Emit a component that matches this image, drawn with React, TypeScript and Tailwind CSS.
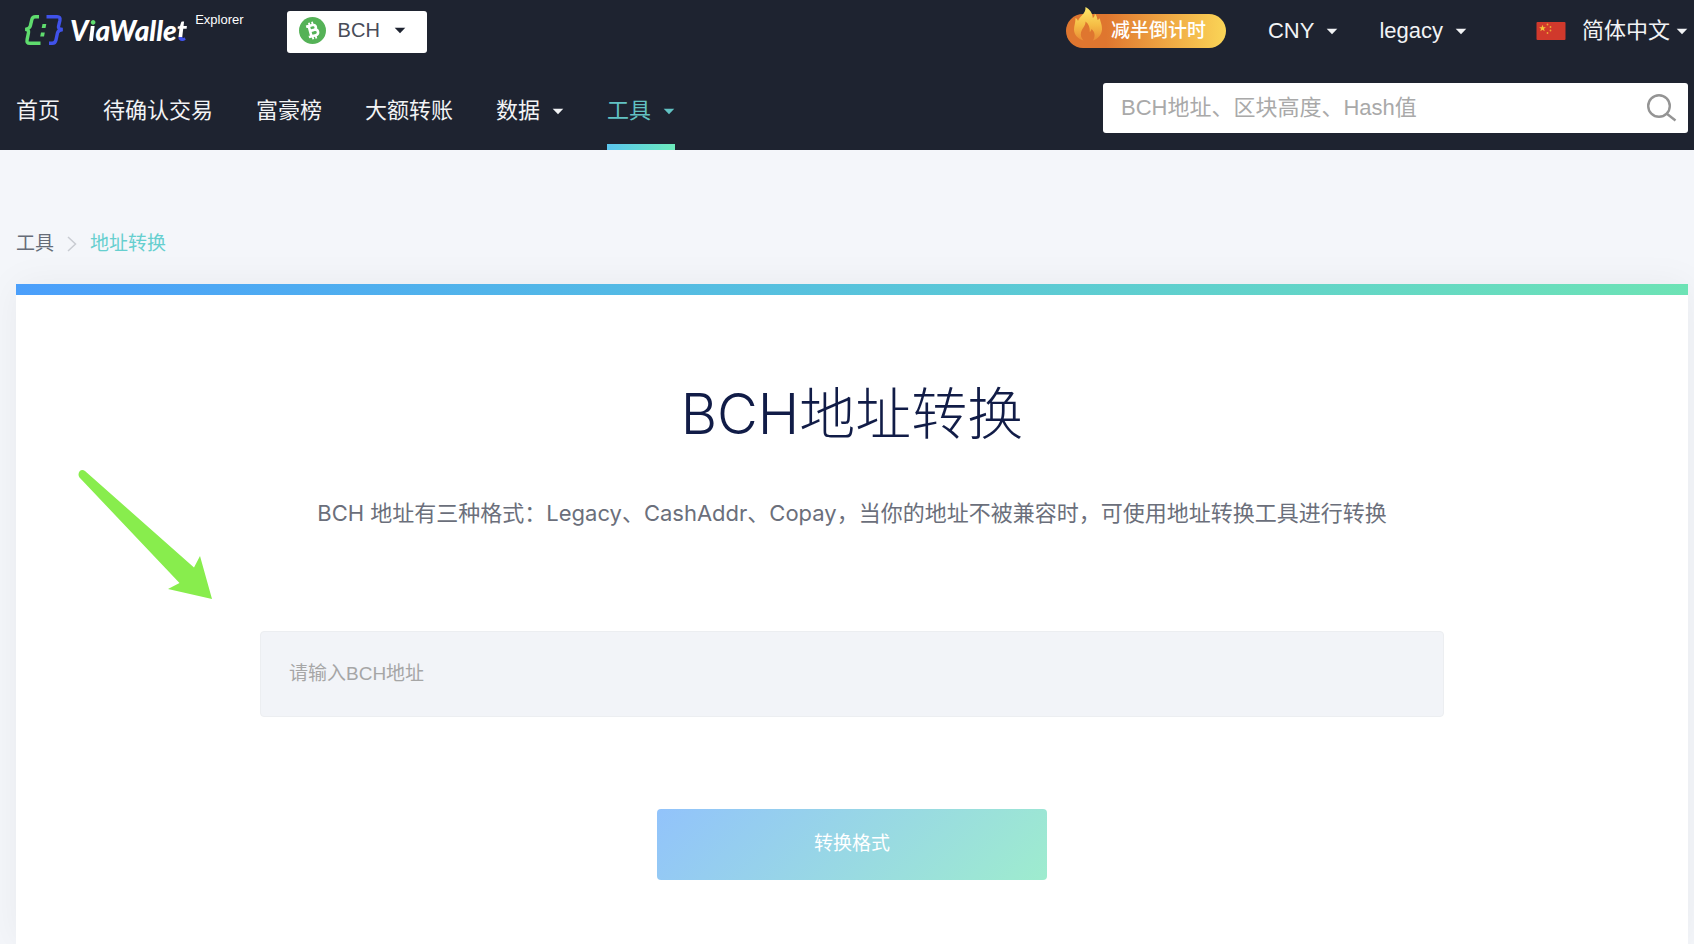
import React from 'react'

function Caret({ className = '' }: { className?: string }) {
  return (
    <svg className={`w-3 h-[7px] shrink-0 ${className}`} viewBox="0 0 12 7" fill="currentColor" aria-hidden="true">
      <path d="M0.7 0.8h10.6L6 6.2z" />
    </svg>
  )
}

function Logo() {
  return (
    <a href="#" className="flex text-white">
      <svg className="w-[42px] h-8 mt-[14px] shrink-0" viewBox="0 0 42 32" fill="none" strokeWidth="3.4" aria-hidden="true">
        <path d="M16 2.700h-3.500c-2.200 0-3.200.9-3.600 2.700L7.300 12c-.4 1.900-1.700 2.900-5 3.400 2.800.4 3.600 1.400 3.200 3.200l-1.400 7c-.5 2.600.4 3.700 2.700 3.700h10.700" stroke="#5fdc6e" />
        <path d="M23.500 2.700h10.700c2.300 0 3.200 1.100 2.700 3.600l-1.400 6.200c-.4 1.900.6 2.700 4.200 3-3.600.4-4.800 1.500-5.200 3.400l-1.500 6.900c-.5 2.400-1.600 3.500-3.800 3.500H26" stroke="#4052ea" />
        <path d="M19.500 10h3.800l-.8 4h-3.800zM18 18.400h3.800l-.8 4h-3.800z" fill="#5fdc6e" />
      </svg>
      <span className="ml-[5px] mt-[14px] whitespace-nowrap font-[Lato,sans-serif] text-[28px] leading-8 font-black italic">
        V
        <span className="-mx-1 bg-linear-to-b from-[#5fdc6e] from-[12px] to-white to-[12px] bg-clip-text px-1 text-transparent">i</span>
        aWalle
        <span className="-mx-1 bg-linear-to-b from-white from-[24px] to-[#4052ea] to-[24px] bg-clip-text px-1 text-transparent">t</span>
      </span>
      <span className="ml-2 mt-3 text-[13px] leading-4">Explorer</span>
    </a>
  )
}

function BchIcon() {
  return (
    <svg className="w-[27px] h-[27px]" viewBox="0 0 27 27" aria-hidden="true">
      <circle cx="13.5" cy="13.5" r="13.5" fill="#55b257" />
      <g transform="rotate(-15 13.5 13.5)" fill="none" stroke="#fff" strokeWidth="2.6">
        <path d="M8.300 8.300h6.600c3.600 0 3.600 5 0 5h-3.600 4.200c4 0 4 5.600 0 5.600H8.300M11 8.300v10.600" />
        <path d="M12 5v3.300M15.200 5v3.300M12 18.900v3.300M15.200 18.900v3.300" strokeWidth="1.8" />
      </g>
    </svg>
  )
}

function FlameIcon() {
  return (
    <svg className="absolute left-[7px] -top-2 w-[30px] h-[36px]" viewBox="0 0 30 36" aria-hidden="true">
      <defs>
        <linearGradient id="flame" x1="0" y1="0" x2="0" y2="1">
          <stop offset="0" stopColor="#fde96a" />
          <stop offset=".55" stopColor="#f5bc45" />
          <stop offset="1" stopColor="#e98b35" />
        </linearGradient>
      </defs>
      <path
        d="M12.500 1c4.500 2.200 7 6 7.300 11 1.500-1 2-2.500 2-4.500 2 2.200 2.300 4 2.700 6.500 1.200-.5 1.800-1 2.500-2-.3 3 2.300 6 2 11.500-.3 5-3.600 9-9 11 2.500-4.500 2-8.500-1.500-11.500-.3 1.500-.8 2.300-1.700 3 .2-4.500-1-8-4.300-10.500.3 4.500-3.500 6.500-4.500 11-.7 3 .3 5.500 2.500 8C4.500 32.500 1 28.500 1 23.500c0-4 1.500-6.500 1.500-11.500 1.300.7 2 1.500 2.500 3C6.500 10 13 8 12.500 1z"
        fill="url(#flame)"
      />
    </svg>
  )
}

function ChinaFlag() {
  return (
    <svg className="w-[30px] h-5" viewBox="0 0 30 20" aria-hidden="true">
      <rect x="0.5" y="1" width="29" height="18" rx="1" fill="#d0392c" />
      <path d="M6.500 3.800l.9 2.400h2.500l-2 1.600.8 2.500-2.200-1.500-2.200 1.500.8-2.500-2-1.600h2.500z" fill="#f4c53a" />
      <g fill="#eda835">
        <circle cx="11.5" cy="3.500" r=".9" />
        <circle cx="14.5" cy="6" r=".9" />
        <circle cx="14.5" cy="9.500" r=".9" />
        <circle cx="11.5" cy="12" r=".9" />
      </g>
    </svg>
  )
}

const navItems = [
  { label: '首页' },
  { label: '待确认交易' },
  { label: '富豪榜' },
  { label: '大额转账' },
  { label: '数据', menu: true },
  { label: '工具', menu: true, active: true },
]

function Header() {
  return (
    <header className="bg-[#1e2330] text-[#f2f3f5] pl-4 pr-[6px] text-[22px] leading-8">
      {/* Top bar */}
      <div className="flex justify-between h-[68px]">
        <div className="flex items-start pl-[7px]">
          <Logo />
          <button className="ml-[43px] mt-[11px] flex h-[42px] w-[140px] items-center rounded-[3px] bg-white pb-1 pl-3 text-xl text-[#484c58]">
            <BchIcon />
            <span className="ml-3">BCH</span>
            <Caret className="ml-[14px] text-[#1e2330]" />
          </button>
        </div>
        <div className="flex h-[62px] items-center">
          <a href="#" className="relative flex h-[34px] items-center rounded-full bg-linear-to-r from-[#df762f] from-25% to-[#fad557] pl-[45px] pr-5 text-[19px] font-medium text-white">
            <FlameIcon />
            减半倒计时
          </a>
          <button className="ml-[42px] flex items-center gap-3">
            CNY
            <Caret />
          </button>
          <button className="ml-[41px] flex items-center gap-3">
            legacy
            <Caret />
          </button>
          <button className="ml-[69px] flex items-center">
            <ChinaFlag />
            <span className="ml-4">简体中文</span>
            <Caret className="ml-[6px]" />
          </button>
        </div>
      </div>

      {/* Navigation */}
      <div className="flex items-start justify-between h-[82px]">
        <nav className="flex h-full gap-[43px]">
          {navItems.map((item) => (
            <a
              key={item.label}
              href="#"
              className={`flex h-full flex-col justify-between whitespace-nowrap pt-[27px] ${item.active ? 'text-[#62c2c3]' : ''}`}
            >
              <span className="flex items-center gap-3">
                {item.label}
                {item.menu && <Caret />}
              </span>
              {item.active && <span className="h-[6px] bg-linear-to-r from-[#5bc5ee] to-[#6debbb]"></span>}
            </a>
          ))}
        </nav>
        <form className="mt-[15px] flex h-[50px] w-[585px] items-center rounded-[3px] bg-white pl-[18px] pr-[11px]">
          <input
            type="text"
            aria-label="BCH地址、区块高度、Hash值"
            placeholder="BCH地址、区块高度、Hash值"
            className="min-w-0 flex-1 bg-transparent text-[#333] outline-none placeholder:text-[#a9a9a9]"
          />
          <button type="button" aria-label="搜索" className="text-[#949494]">
            <svg className="w-[31px] h-[30px]" viewBox="0 0 31 30" fill="none" stroke="currentColor" strokeWidth="2.4">
              <circle cx="13" cy="13" r="10.8" />
              <path d="M20.500 20.500L29.500 27.500" />
            </svg>
          </button>
        </form>
      </div>
    </header>
  )
}

function Arrow() {
  return (
    <svg className="absolute left-[61px] top-[184px] w-[136px] h-[132px]" viewBox="0 0 136 132" fill="#88ed4d" aria-hidden="true">
      <path d="M8 3L117 99.500 123 88 135 131 91 121 102.500 115 2.500 9.500C-.5 5 4-.5 8 3z" />
    </svg>
  )
}

export default function App() {
  return (
    <div className="flex min-h-screen flex-col bg-[#f4f6fa] font-['Liberation_Sans','Noto_Sans_CJK_SC',sans-serif]">
      <Header />
      <main className="flex flex-1 flex-col pl-4 pr-[6px] pt-[78px]">
        <nav className="flex items-center text-[19px] leading-8 text-[#666c78]">
          <a href="#">工具</a>
          <svg className="mx-[13px] w-[10px] h-4" viewBox="0 0 10 16" fill="none" stroke="#c9ccd2" strokeWidth="1.5" aria-hidden="true">
            <path d="M1 1l7.500 7L1 15" />
          </svg>
          <a href="#" className="text-[#66cfcf]">地址转换</a>
        </nav>

        {/* Converter card */}
        <section className="relative mt-6 flex flex-1 flex-col items-center bg-white pb-16 shadow-[0_0_36px_rgba(0,0,0,0.05)]">
          <div className="h-[11px] w-full bg-linear-to-r from-[#4b9ffb] to-[#6de3b5]"></div>
          <h1 className="mt-[87px] font-[Inter,'Noto_Sans_CJK_SC',sans-serif] text-[56px] leading-[64px] font-light text-[#111c47]">
            BCH地址转换
          </h1>
          <p className="mt-[51px] font-[Inter,'Noto_Sans_CJK_SC',sans-serif] text-[22px] leading-8 text-[#6b6f7b]">
            BCH 地址有三种格式：Legacy、CashAddr、Copay，当你的地址不被兼容时，可使用地址转换工具进行转换
          </p>
          <input
            type="text"
            aria-label="请输入BCH地址"
            placeholder="请输入BCH地址"
            className="mt-[102px] h-[86px] w-[calc(100%-488px)] rounded-[4px] border border-[#eceef1] bg-[#f2f4f8] px-7 text-[19px] text-[#333] outline-none placeholder:text-[#a6a6a6]"
          />
          <button className="mt-[92px] h-[71px] w-[390px] rounded-[4px] bg-linear-[135deg] from-[#92c3fb] to-[#9eecce] text-[19px] text-white">
            转换格式
          </button>
          <Arrow />
        </section>
      </main>
    </div>
  )
}
